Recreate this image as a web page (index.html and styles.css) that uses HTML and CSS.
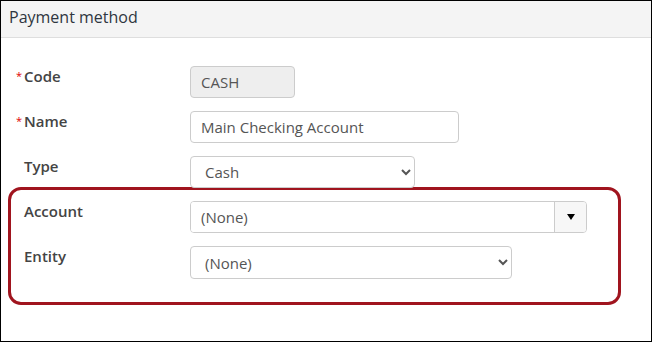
FILE: index.html
```html
<!DOCTYPE html>
<html>
<head>
<meta charset="utf-8">
<link rel="stylesheet" href="styles.css">
</head>
<body>
<div class="panel">
  <div class="panel-header">Payment method</div>
  <div class="panel-body">
    <div class="row">
      <label class="label"><span class="req">*</span>Code</label>
      <input class="field field-code" type="text" value="CASH" disabled>
    </div>
    <div class="row">
      <label class="label"><span class="req">*</span>Name</label>
      <input class="field field-name" type="text" value="Main Checking Account">
    </div>
    <div class="row">
      <label class="label">Type</label>
      <select class="field field-type"><option>Cash</option></select>
    </div>
    <div class="highlight">
      <div class="row">
        <label class="label">Account</label>
        <div class="combo">
          <input class="combo-input" type="text" value="(None)">
          <span class="combo-btn"><span class="tri"></span></span>
        </div>
      </div>
      <div class="row">
        <label class="label">Entity</label>
        <select class="field field-entity"><option>(None)</option></select>
      </div>
    </div>
  </div>
</div>
</body>
</html>
```
FILE: styles.css
```css
html, body {
  margin: 0;
  padding: 0;
  background: #fff;
}
.panel {
  box-sizing: border-box;
  width: 652px;
  height: 342px;
  border: 1px solid #000;
  font-family: "Open Sans", "Liberation Sans", sans-serif;
}
.panel-header {
  height: 36px;
  background: #f4f4f4;
  border-bottom: 1px solid #dedede;
  padding-left: 8px;
  font-size: 16px;
  line-height: 33px;
  color: #2f3640;
}
.panel-body {
  padding-top: 28px;
}
.row {
  display: flex;
  align-items: flex-start;
  margin-bottom: 13px;
}
.label {
  box-sizing: border-box;
  width: 189px;
  padding-left: 23px;
  font-size: 15px;
  font-weight: 600;
  color: #444;
  line-height: 18px;
  padding-top: 1px;
  position: relative;
}
.req {
  position: absolute;
  left: 15px;
  top: 1px;
  color: #e00000;
  font-size: 11px;
  font-weight: 400;
}
.field {
  box-sizing: border-box;
  height: 32px;
  border: 1px solid #ccc;
  border-radius: 4px;
  background: #fff;
  font-family: "Open Sans", "Liberation Sans", sans-serif;
  font-size: 15px;
  color: #555;
  padding: 0 10px;
  margin: 0;
  outline: none;
}
.field-code {
  width: 105px;
  background: #eee;
}
.field-name {
  width: 269px;
}
.field-type {
  width: 225px;
  padding-left: 10px;
}
.field-entity {
  width: 322px;
  padding-left: 10px;
  height: 33px;
}
.highlight {
  box-sizing: border-box;
  width: 613px;
  margin-left: 7px;
  margin-top: -14px;
  border: 3px solid #a0141e;
  border-radius: 13px;
  padding-top: 11px;
  padding-bottom: 10px;
}
.highlight .label {
  width: 179px;
  padding-left: 13px;
}
.combo {
  display: flex;
  box-sizing: border-box;
  width: 397px;
  height: 32px;
  border: 1px solid #ccc;
  border-radius: 4px;
  overflow: hidden;
}
.combo-input {
  flex: 1;
  min-width: 0;
  border: none;
  padding: 0 10px;
  font-family: "Open Sans", "Liberation Sans", sans-serif;
  font-size: 15px;
  color: #555;
  outline: none;
  background: #fff;
}
.combo-btn {
  width: 31px;
  border-left: 1px solid #ccc;
  background: #f7f7f7;
  display: flex;
  align-items: center;
  justify-content: center;
}
.tri {
  width: 0;
  height: 0;
  border-left: 4px solid transparent;
  border-right: 4px solid transparent;
  border-top: 6px solid #000;
}
```
